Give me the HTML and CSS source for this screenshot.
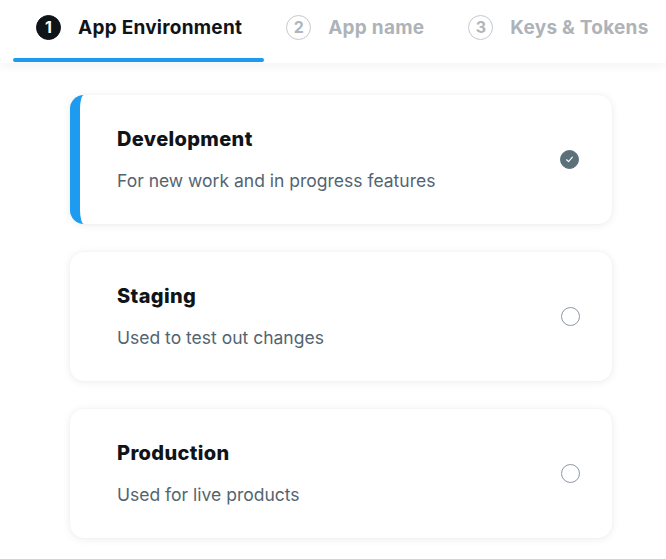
FILE: index.html
```html
<!DOCTYPE html>
<html>
<head>
<meta charset="utf-8">
<link rel="stylesheet" href="styles.css">
</head>
<body>
<header class="steps">
  <div class="step active">
    <div class="step-row"><span class="num">1</span><span class="label">App Environment</span></div>
    <div class="bar"></div>
  </div>
  <div class="step">
    <div class="step-row"><span class="num">2</span><span class="label">App name</span></div>
    <div class="bar"></div>
  </div>
  <div class="step">
    <div class="step-row"><span class="num">3</span><span class="label">Keys &amp; Tokens</span></div>
    <div class="bar"></div>
  </div>
</header>
<main class="cards">
  <div class="card selected">
    <div class="text">
      <div class="title">Development</div>
      <div class="desc">For new work and in progress features</div>
    </div>
    <span class="radio checked"><svg viewBox="0 0 20 20" width="19" height="19"><path d="M6.6 10.3 L8.9 12.6 L13.4 7.2" fill="none" stroke="#fff" stroke-width="1.3" stroke-linecap="round" stroke-linejoin="round"/></svg></span>
  </div>
  <div class="card">
    <div class="text">
      <div class="title">Staging</div>
      <div class="desc">Used to test out changes</div>
    </div>
    <span class="radio"></span>
  </div>
  <div class="card">
    <div class="text">
      <div class="title">Production</div>
      <div class="desc">Used for live products</div>
    </div>
    <span class="radio"></span>
  </div>
</main>
</body>
</html>
```
FILE: styles.css
```css
* { box-sizing: border-box; }
html, body { margin: 0; padding: 0; background: #fff; }
body {
  font-family: Inter, "Noto Sans", sans-serif;
  width: 666px;
  height: 559px;
  overflow: hidden;
}
.steps {
  display: flex;
  padding-left: 13px;
  height: 63px;
  box-shadow: 0 3px 10px rgba(0, 0, 0, 0.05);
  white-space: nowrap;
  position: relative;
  z-index: 1;
}
.step {
  display: flex;
  flex-direction: column;
  flex: none;
}
.step-row {
  display: flex;
  align-items: center;
  gap: 17px;
  padding: 15px 22px 0 23px;
  height: 39px;
}
.step + .step .step-row { padding-left: 22px; }
.num {
  width: 25px;
  height: 25px;
  border-radius: 50%;
  border: 1.5px solid #c4c9ce;
  color: #b0b6bc;
  font-size: 16px;
  font-weight: 700;
  display: flex;
  align-items: center;
  justify-content: center;
  flex: none;
}
.label {
  font-size: 19px;
  font-weight: 700;
  color: #adb3b9;
  letter-spacing: 0.25px;
}
.active .num {
  background: #0f1419;
  border-color: #0f1419;
  color: #fff;
}
.active .label { color: #0f1419; }
.bar {
  height: 4px;
  margin-top: 19px;
  border-radius: 2px;
}
.active .bar { background: #1d9bf0; }
.cards {
  display: flex;
  flex-direction: column;
  gap: 28px;
  padding-top: 32px;
  margin-left: 70px;
  width: 542px;
}
.card {
  height: 129px;
  background: #fff;
  border-radius: 14px;
  box-shadow: 0 1px 9px rgba(0, 0, 0, 0.08), 0 0 2px rgba(0, 0, 0, 0.04);
  display: flex;
  align-items: center;
  justify-content: space-between;
  padding: 0 32px 0 47px;
}
.card.selected {
  border-left: 10px solid #1d9bf0;
  padding-left: 37px;
}
.text {
  display: flex;
  flex-direction: column;
  gap: 19px;
}
.title {
  font-size: 20px;
  line-height: 24px;
  font-weight: 800;
  color: #0f1419;
  letter-spacing: 0.35px;
}
.desc {
  font-size: 17.5px;
  line-height: 22px;
  color: #536471;
}
.radio {
  width: 19px;
  height: 19px;
  border-radius: 50%;
  border: 1px solid #8b98a5;
  display: flex;
  align-items: center;
  justify-content: center;
  flex: none;
}
.radio.checked {
  background: #5b7079;
  border-color: #5b7079;
  margin-right: 1px;
}
.radio svg { display: block; }
```
